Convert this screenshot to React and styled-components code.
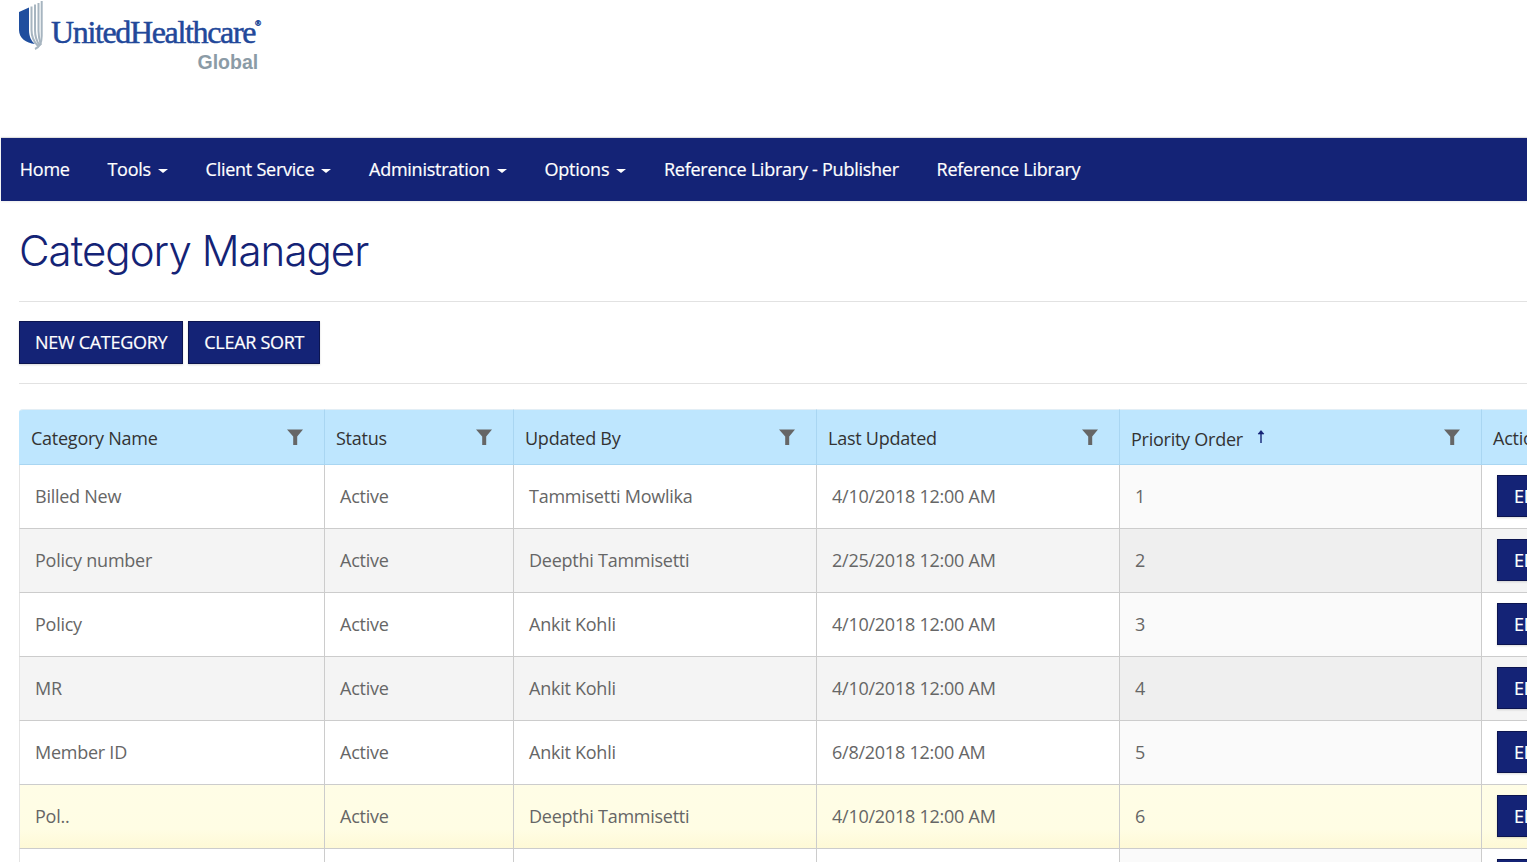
import React from "react";
import styled, { createGlobalStyle } from "styled-components";

const Global = createGlobalStyle`
  html, body { margin: 0; padding: 0; height: 862px; overflow: hidden; background: #fff; }
  body { font-family: "Open Sans", "Liberation Sans", sans-serif; }
  * { box-sizing: border-box; }
`;

const Page = styled.div`
  width: 1527px;
  height: 862px;
  overflow: hidden;
`;

const Header = styled.header`
  height: 138px;
  padding-left: 19px;
`;

const Logo = styled.div`
  display: inline-flex;
  align-items: flex-start;
  gap: 8px;
`;

const Wordmark = styled.div`
  display: flex;
  flex-direction: column;
  align-items: flex-end;
  padding-top: 13px;
`;

const BrandName = styled.div`
  font-family: "Liberation Serif", serif;
  font-size: 32px;
  line-height: 38px;
  letter-spacing: -1.35px;
  color: #22489a;
  -webkit-text-stroke: 0.5px #22489a;
  white-space: nowrap;
  sup { font-size: 8px; line-height: 0; letter-spacing: 0; vertical-align: 17px; }
`;

const BrandSub = styled.div`
  font-family: "Liberation Sans", sans-serif;
  font-weight: 700;
  font-size: 19.5px;
  line-height: 20px;
  margin-top: 1px;
  margin-right: 3px;
  color: #8b9ba6;
`;

const Nav = styled.nav`
  margin-left: 1px;
  height: 63px;
  background: #142376;
  display: flex;
  align-items: center;
  box-shadow: 0 -1px 1px rgba(0, 0, 0, 0.12), 0 1px 2px rgba(0, 0, 0, 0.08);
`;

const NavItem = styled.a`
  padding: 0 18.85px;
  font-size: 18px;
  letter-spacing: -0.25px;
  line-height: 63px;
  color: #fff;
  -webkit-text-stroke: 0.2px #fff;
  white-space: nowrap;
  display: flex;
  align-items: center;
`;

const Caret = styled.span`
  width: 0;
  height: 0;
  margin-left: 7px;
  margin-top: 3px;
  border-top: 4px solid #fff;
  border-left: 5px solid transparent;
  border-right: 5px solid transparent;
`;

const Content = styled.main`
  padding-left: 19px;
`;

const Title = styled.h1`
  margin: 0;
  height: 101px;
  padding-top: 24px;
  font-family: "Inter", "Liberation Sans", sans-serif;
  font-weight: 260;
  font-size: 42px;
  line-height: 52px;
  letter-spacing: -0.96px;
  color: #142376;
  border-bottom: 1px solid #e2e2e2;
`;

const Toolbar = styled.div`
  display: flex;
  gap: 5px;
  height: 82px;
  padding-top: 19px;
  border-bottom: 1px solid #e2e2e2;
`;

const Button = styled.button`
  height: 43px;
  padding: 0 15px 2px;
  border: 1px solid #0c1550;
  border-radius: 0;
  background: #142376;
  color: #fff;
  font-family: "Open Sans", sans-serif;
  font-size: 18px;
  letter-spacing: -0.29px;
  -webkit-text-stroke: 0.2px #fff;
  white-space: nowrap;
  box-shadow: 0 1px 2px rgba(0, 0, 0, 0.15);
`;

const TableWrap = styled.div`
  margin-top: 25px;
  width: 1600px;
`;

const Table = styled.table`
  table-layout: fixed;
  border-collapse: separate;
  border-spacing: 0;
  width: 1600px;
`;

const Th = styled.th`
  position: relative;
  height: 56px;
  padding: 1px 0 0 11px;
  background: #bee6fe;
  border-right: 1px solid #a9d6f2;
  border-bottom: 1px solid #a9d6f2;
  border-top: 1px solid #e3eef5;
  font-size: 18px;
  font-weight: 400;
  letter-spacing: -0.25px;
  text-align: left;
  color: #333;
  white-space: nowrap;
  &:first-child { border-top-left-radius: 4px; border-left: 1px solid #bee6fe; }
`;

const HeadLabel = styled.span`
  position: relative;
  top: ${(p) => (p.$low ? "1px" : "0")};
`;

const FilterIcon = styled.svg`
  position: absolute;
  top: 19px;
  right: 21px;
  width: 16px;
  height: 16px;
  fill: #666;
`;

const SortIcon = styled.svg`
  position: absolute;
  top: 19px;
  left: 136px;
  width: 10px;
  height: 15px;
  stroke: #142376;
  fill: none;
`;

const rowBg = (p) => {
  if (p.$selected) return "linear-gradient(#fffde6, #fffde4 70%, #fef9d6)";
  if (p.$sorted) return p.$even ? "#efefef" : "#fafafa";
  return p.$even ? "#f4f4f4" : "#fff";
};

const Td = styled.td`
  height: 64px;
  padding: 0 0 2px 15px;
  background: ${rowBg};
  border-right: 1px solid #ccc;
  border-bottom: 1px solid #ccc;
  font-size: 18px;
  letter-spacing: -0.25px;
  color: #666;
  white-space: nowrap;
  &:first-child { border-left: 1px solid #e4e4e4; }
`;

const EditButton = styled(Button)`
  display: block;
  height: 42px;
  width: 70px;
  text-align: left;
  padding: 0 16px;
`;

const columns = [306, 189, 303, 303, 362, 137];

const heads = ["Category Name", "Status", "Updated By", "Last Updated", "Priority Order"];

const rows = [
  ["Billed New", "Active", "Tammisetti Mowlika", "4/10/2018 12:00 AM", "1"],
  ["Policy number", "Active", "Deepthi Tammisetti", "2/25/2018 12:00 AM", "2"],
  ["Policy", "Active", "Ankit Kohli", "4/10/2018 12:00 AM", "3"],
  ["MR", "Active", "Ankit Kohli", "4/10/2018 12:00 AM", "4"],
  ["Member ID", "Active", "Ankit Kohli", "6/8/2018 12:00 AM", "5"],
  ["Pol..", "Active", "Deepthi Tammisetti", "4/10/2018 12:00 AM", "6"],
  ["", "", "", "", ""],
];

const Filter = () => (
  <FilterIcon viewBox="0 0 16 16" aria-hidden="true">
    <path d="M0 0.5h16L10.2 7.5V16H6.2V7.5z" />
  </FilterIcon>
);

const Sort = () => (
  <SortIcon viewBox="0 0 10 15" aria-hidden="true">
    <path d="M5 14V2" strokeWidth="1.4" />
    <path d="M2 5L5 1.5 8 5z" fill="#142376" strokeWidth="0.6" />
  </SortIcon>
);

const Shield = () => (
  <svg width="24" height="50" viewBox="0 0 24 50" aria-hidden="true">
    <path d="M0 12L10 7.5V30C10 36 12 41 16 44C7 43 0 38 0 30z" fill="#1f4e9e" />
    <g fill="none" stroke="#a7b5c0" strokeWidth="2">
      <path d="M12.5 6.5V30C12.5 37 15 42 19 46" />
      <path d="M16 4.5V30C16 37 18 42 21 46" />
      <path d="M19.5 3V31C19.5 37 20.5 41 22 45" />
      <path d="M22.7 1V36C22.7 42 21 47 16 49" />
    </g>
  </svg>
);

export default function App() {
  return (
    <Page>
      <Global />
      <Header>
        <Logo>
          <Shield />
          <Wordmark>
            <BrandName>
              UnitedHealthcare<sup>®</sup>
            </BrandName>
            <BrandSub>Global</BrandSub>
          </Wordmark>
        </Logo>
      </Header>
      <Nav>
        <NavItem>Home</NavItem>
        <NavItem>Tools<Caret /></NavItem>
        <NavItem>Client Service<Caret /></NavItem>
        <NavItem>Administration<Caret /></NavItem>
        <NavItem>Options<Caret /></NavItem>
        <NavItem>Reference Library - Publisher</NavItem>
        <NavItem>Reference Library</NavItem>
      </Nav>
      <Content>
        <Title>Category Manager</Title>
        <Toolbar>
          <Button>NEW CATEGORY</Button>
          <Button>CLEAR SORT</Button>
        </Toolbar>
        <TableWrap>
          <Table>
            <colgroup>
              {columns.map((w, i) => (
                <col key={i} width={w} />
              ))}
            </colgroup>
            <thead>
              <tr>
                {heads.map((h, i) => (
                  <Th key={h}>
                    <HeadLabel $low={i === 4}>{h}</HeadLabel>
                    {i === 4 && <Sort />}
                    <Filter />
                  </Th>
                ))}
                <Th>Action</Th>
              </tr>
            </thead>
            <tbody>
              {rows.map((r, idx) => {
                const even = idx % 2 === 1;
                const selected = idx === 5;
                return (
                  <tr key={idx}>
                    {r.map((c, i) => (
                      <Td key={i} $even={even} $selected={selected} $sorted={i === 4}>
                        {c}
                      </Td>
                    ))}
                    <Td $even={even} $selected={selected}>
                      <EditButton>EDIT</EditButton>
                    </Td>
                  </tr>
                );
              })}
            </tbody>
          </Table>
        </TableWrap>
      </Content>
    </Page>
  );
}
